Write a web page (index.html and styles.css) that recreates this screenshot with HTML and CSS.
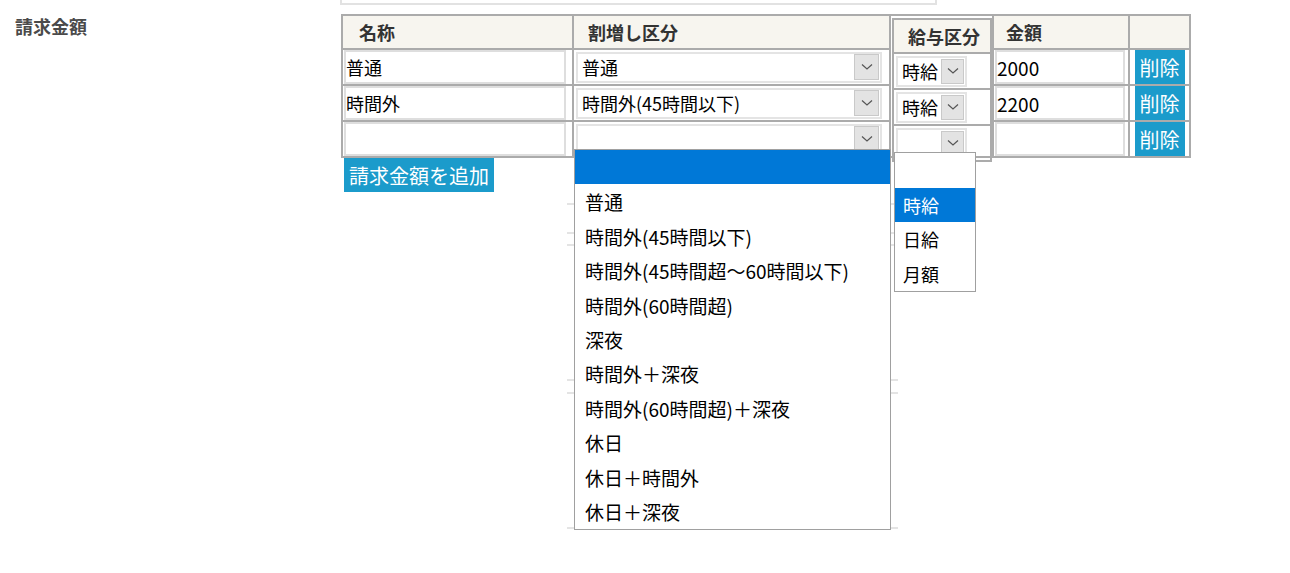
FILE: index.html
```html
<!DOCTYPE html>
<html lang="ja">

<head>
    <meta charset="UTF-8">
    <meta name="viewport" content="width=device-width, initial-scale=1.0">
    <title>請求金額</title>
    <link rel="stylesheet" href="styles.css">
</head>

<body>
    <div class="page">
        <div class="field-label">請求金額</div>

        <div class="field-body">
            <div class="prev-box"></div>

            <table class="charge-table">
                <colgroup>
                    <col class="c-name">
                    <col class="c-kbn">
                    <col class="c-pay">
                    <col class="c-amount">
                    <col class="c-del">
                </colgroup>
                <tbody>
                    <tr class="head-row">
                        <th class="th-name">名称</th>
                        <th>割増し区分</th>
                        <td class="pay-cell" rowspan="4">
                            <div class="pay-box">
                                <div class="pay-head">給与区分</div>
                                <div class="pay-row">
                                    <div class="sel sel-sm"><span>時給</span><span class="sel-btn"><svg width="12" height="8" viewBox="0 0 12 8"><polyline points="1,1.5 6,6 11,1.5" fill="none" stroke="#555" stroke-width="1.2"/></svg></span></div>
                                </div>
                                <div class="pay-row">
                                    <div class="sel sel-sm"><span>時給</span><span class="sel-btn"><svg width="12" height="8" viewBox="0 0 12 8"><polyline points="1,1.5 6,6 11,1.5" fill="none" stroke="#555" stroke-width="1.2"/></svg></span></div>
                                </div>
                                <div class="pay-row">
                                    <div class="sel sel-sm"><span></span><span class="sel-btn"><svg width="12" height="8" viewBox="0 0 12 8"><polyline points="1,1.5 6,6 11,1.5" fill="none" stroke="#555" stroke-width="1.2"/></svg></span></div>
                                </div>
                            </div>
                        </td>
                        <th class="th-amount">金額</th>
                        <th></th>
                    </tr>
                    <tr>
                        <td><input class="txt txt-name" type="text" value="普通"></td>
                        <td>
                            <div class="sel sel-kbn"><span>普通</span><span class="sel-btn"><svg width="12" height="8" viewBox="0 0 12 8"><polyline points="1,1.5 6,6 11,1.5" fill="none" stroke="#555" stroke-width="1.2"/></svg></span></div>
                        </td>
                        <td><input class="txt txt-amount" type="text" value="2000"></td>
                        <td class="del-cell"><button class="btn-del">削除</button></td>
                    </tr>
                    <tr>
                        <td><input class="txt txt-name" type="text" value="時間外"></td>
                        <td>
                            <div class="sel sel-kbn"><span>時間外(45時間以下)</span><span class="sel-btn"><svg width="12" height="8" viewBox="0 0 12 8"><polyline points="1,1.5 6,6 11,1.5" fill="none" stroke="#555" stroke-width="1.2"/></svg></span></div>
                        </td>
                        <td><input class="txt txt-amount" type="text" value="2200"></td>
                        <td class="del-cell"><button class="btn-del">削除</button></td>
                    </tr>
                    <tr>
                        <td><input class="txt txt-name" type="text" value=""></td>
                        <td>
                            <div class="sel sel-kbn"><span></span><span class="sel-btn"><svg width="12" height="8" viewBox="0 0 12 8"><polyline points="1,1.5 6,6 11,1.5" fill="none" stroke="#555" stroke-width="1.2"/></svg></span></div>
                        </td>
                        <td><input class="txt txt-amount" type="text" value=""></td>
                        <td class="del-cell"><button class="btn-del">削除</button></td>
                    </tr>
                </tbody>
            </table>

            <button class="btn-add">請求金額を追加</button>

            <!-- next section, mostly hidden by the open lists -->
            <div class="under">
                <div class="uline l1"></div>
                <div class="uline l2"></div>
                <div class="uline l3"></div>
                <div class="uline l4"></div>
                <div class="uline l5"></div>
                <div class="uline l6"></div>
            </div>

            <ul class="dd dd-kbn">
                <li class="on"></li>
                <li>普通</li>
                <li>時間外(45時間以下)</li>
                <li>時間外(45時間超～60時間以下)</li>
                <li>時間外(60時間超)</li>
                <li>深夜</li>
                <li>時間外＋深夜</li>
                <li>時間外(60時間超)＋深夜</li>
                <li>休日</li>
                <li>休日＋時間外</li>
                <li>休日＋深夜</li>
            </ul>

            <ul class="dd dd-pay">
                <li></li>
                <li class="on">時給</li>
                <li>日給</li>
                <li>月額</li>
            </ul>
        </div>
    </div>
</body>

</html>
```

FILE: styles.css
```css
body {
    margin: 0;
    font-family: "Noto Sans CJK JP", "Noto Sans", sans-serif;
    color: #111;
    background: #fff;
}

.page {
    display: flex;
    min-height: 573px;
}

.field-label {
    width: 326px;
    padding: 14px 0 0 15px;
    font-size: 18px;
    line-height: 24px;
    font-weight: bold;
    color: #4a4a4a;
}

.field-body {
    position: relative;
    width: 848px;
}

.prev-box {
    width: 593px;
    height: 3px;
    margin-left: -1px;
    border: 2px solid #e2e2e2;
    border-top: 0;
}

.charge-table {
    margin-top: 9px;
    width: 848px;
    border-collapse: collapse;
    table-layout: fixed;
    border: 2px solid #999;
}

.c-name {
    width: 231px;
}

.c-kbn {
    width: 317px;
}

.c-pay {
    width: 103px;
}

.c-amount {
    width: 136px;
}

.c-del {
    width: 61px;
}

th {
    height: 32px;
    padding: 0 0 0 14px;
    background: #f7f5ef;
    border: 2px solid #ababab;
    text-align: left;
    font-size: 18px;
    font-weight: bold;
    color: #333;
}

.th-name {
    padding-left: 16px;
}

.th-amount {
    padding-left: 12px;
}

td {
    height: 34px;
    padding: 0 1px;
    border: 2px solid #ababab;
}

.txt {
    box-sizing: border-box;
    height: 34px;
    padding: 0;
    border: 2px solid #dedede;
    font: inherit;
    font-size: 18px;
    color: #000;
    outline: none;
}

.txt-name {
    width: 222px;
}

.txt-amount {
    width: 130px;
    font-size: 19px;
}

.sel {
    box-sizing: border-box;
    display: flex;
    align-items: center;
    justify-content: space-between;
    height: 31px;
    border: 2px solid #e4e4e4;
    font-size: 18px;
    color: #000;
    white-space: nowrap;
}

.sel > span:first-child {
    padding-left: 4px;
}

.sel-kbn {
    width: 306px;
    margin-left: 1px;
}

.sel-sm {
    width: 71px;
    margin-left: 2px;
}

.sel-btn {
    box-sizing: border-box;
    display: flex;
    align-items: center;
    justify-content: center;
    width: 25px;
    height: 26px;
    margin-right: 1px;
    background: #e3e3e3;
    border: 1px solid #c9c9c9;
}

.sel-sm .sel-btn {
    width: 23px;
    height: 25px;
}

.pay-cell {
    padding: 0;
    vertical-align: top;
}

.pay-box {
    margin: 2px 0 -6px 1px;
    border: 2px solid #ababab;
    background: #fff;
}

.pay-head {
    height: 32px;
    padding-left: 14px;
    background: #f7f5ef;
    border-bottom: 2px solid #ababab;
    font-size: 18px;
    font-weight: bold;
    line-height: 32px;
    color: #333;
}

.pay-row {
    display: flex;
    align-items: center;
    height: 34px;
    border-bottom: 2px solid #ababab;
}

.pay-row:last-child {
    border-bottom: 0;
}

.del-cell {
    text-align: center;
}

.btn-del {
    width: 50px;
    height: 34px;
    padding: 0;
    border: none;
    background: #1b9bcb;
    color: #fff;
    font: inherit;
    font-size: 20px;
}

.btn-add {
    display: block;
    height: 34px;
    margin: 0 0 0 3px;
    padding: 0 5px;
    border: none;
    background: #1b9bcb;
    color: #fff;
    font: inherit;
    font-size: 20px;
}

.under {
    width: 331px;
    margin-left: 226px;
}

.uline {
    border-top: 2px solid #e4e4e4;
}

.l1 {
    margin-top: 11px;
}

.l2 {
    margin-top: 27px;
}

.l3 {
    margin-top: 10px;
}

.l4 {
    margin-top: 133px;
}

.l5 {
    margin-top: 11px;
}

.l6 {
    margin-top: 133px;
}

.dd {
    position: absolute;
    z-index: 2;
    box-sizing: border-box;
    display: flex;
    flex-direction: column;
    margin: 0;
    padding: 0;
    list-style: none;
    background: #fff;
    border: 1px solid #a0a0a0;
    color: #000;
}

.dd li {
    flex: 1 1 0;
    display: flex;
    align-items: center;
    white-space: nowrap;
}

.dd li.on {
    background: #0078d7;
    color: #fff;
}

.dd-kbn {
    left: 233px;
    top: 149px;
    width: 317px;
    height: 381px;
    font-size: 19px;
}

.dd-kbn li {
    padding-left: 10px;
}

.dd-pay {
    left: 553px;
    top: 152px;
    width: 82px;
    height: 140px;
    font-size: 18px;
}

.dd-pay li {
    padding-left: 8px;
}
```
